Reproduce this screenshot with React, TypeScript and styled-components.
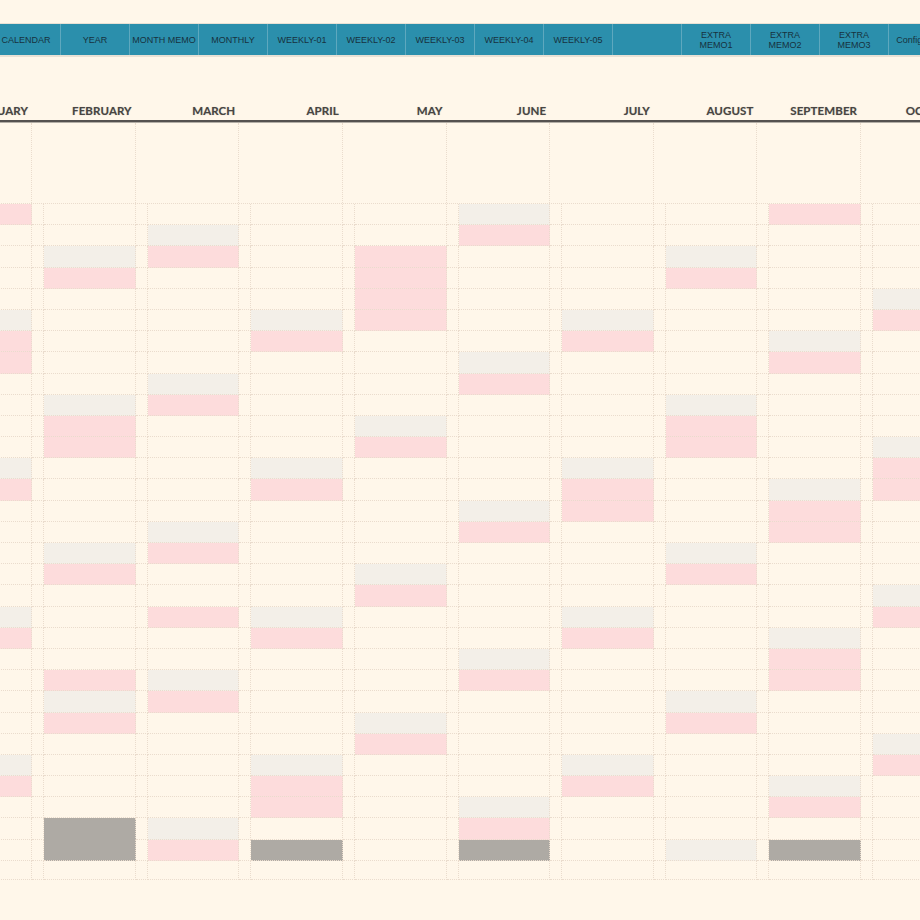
import React from "react";
import styled, { createGlobalStyle } from "styled-components";

type DayKind = "plain" | "sat" | "sun" | "void";

const YEAR = 2024;
const NARROW = 12;
const WIDE = 91.65;
const GROUP = NARROW + WIDE;
const LINE = "#eadccd";

const MONTHS = [
  "JANUARY", "FEBRUARY", "MARCH", "APRIL", "MAY", "JUNE",
  "JULY", "AUGUST", "SEPTEMBER", "OCTOBER", "NOVEMBER", "DECEMBER",
];

const TABS = [
  "CALENDAR", "YEAR", "MONTH MEMO", "MONTHLY", "WEEKLY-01", "WEEKLY-02", "WEEKLY-03",
  "WEEKLY-04", "WEEKLY-05", "", "EXTRA\nMEMO1", "EXTRA\nMEMO2", "EXTRA\nMEMO3", "Configuration",
];

// national holidays (month-day)
const HOLIDAYS = new Set([
  "1-1", "1-8", "2-11", "2-12", "2-23", "3-20", "4-29", "5-3", "5-4", "5-5", "5-6",
  "7-15", "8-11", "8-12", "9-16", "9-22", "9-23", "10-14", "11-3", "11-4", "11-23",
]);

const dayKind = (month: number, day: number): DayKind => {
  if (day > 31) return "plain";
  const date = new Date(YEAR, month, day);
  if (date.getMonth() !== month) return "void";
  if (date.getDay() === 0 || HOLIDAYS.has(`${month + 1}-${day}`)) return "sun";
  if (date.getDay() === 6) return "sat";
  return "plain";
};

const GlobalStyle = createGlobalStyle`
  html, body {
    margin: 0;
    padding: 0;
    background: #fff7ea;
    overflow: hidden;
  }
  * {
    box-sizing: border-box;
  }
`;

const Page = styled.div`
  width: 920px;
  height: 920px;
  overflow: hidden;
  background: #fff7ea;
  padding-top: 23px;
  font-family: "Liberation Sans", Arial, sans-serif;
`;

const TabBar = styled.nav`
  display: flex;
  margin-left: -8px;
  width: 1000px;
  height: 34px;
  background: #2b8fac;
  border-top: 1px solid #e8e1d5;
  border-bottom: 2px solid #e8e1d5;
`;

const Tab = styled.div`
  flex: 0 0 69px;
  display: flex;
  align-items: center;
  justify-content: center;
  text-align: center;
  white-space: pre-line;
  border-right: 1px solid #5ea8be;
  font-size: 9px;
  line-height: 10px;
  color: #17323e;
`;

const Sheet = styled.section`
  margin-left: ${-(GROUP - 32)}px;
  width: ${GROUP * 12}px;
`;

const columns = `repeat(12, ${NARROW}px ${WIDE}px)`;

const MonthHeader = styled.div`
  display: grid;
  grid-template-columns: ${columns};
  height: 40px;
  margin-top: 25px;
  border-bottom: 2px solid #555250;
  box-shadow: 0 1px 0 #b3aea6;
`;

const MonthName = styled.div`
  grid-column: span 2;
  align-self: end;
  text-align: right;
  padding: 0 4px 3px 0;
  font-family: Lato, "Liberation Sans", sans-serif;
  font-weight: 700;
  font-size: 11.5px;
  line-height: 13px;
  letter-spacing: 0.1px;
  color: #474543;
  text-shadow: 0 0 1px rgba(60, 55, 50, 0.35);
`;

const MemoRow = styled.div`
  display: grid;
  grid-template-columns: ${columns};
  height: 81px;
  margin-top: 1px;
  border-bottom: 1px dotted ${LINE};
`;

const MemoCell = styled.div`
  grid-column: span 2;
  border-right: 1px dotted ${LINE};
`;

const DayGrid = styled.div`
  display: grid;
  grid-template-columns: ${columns};
  grid-template-rows: repeat(31, 21.2px) 19px;
`;

const FILL: Record<DayKind, string> = {
  plain: "transparent",
  sat: "#f3efe8",
  sun: "#fddcdc",
  void: "#aeaaa4",
};

const Cell = styled.div<{ $kind?: DayKind; $joined?: boolean }>`
  background: ${({ $kind }) => FILL[$kind ?? "plain"]};
  border-right: 1px dotted ${LINE};
  border-bottom: 1px ${({ $joined }) => ($joined ? "solid #aeaaa4" : `dotted ${LINE}`)};
`;

const App: React.FC = () => {
  const days = Array.from({ length: 32 }, (_, i) => i + 1);

  return (
    <Page>
      <GlobalStyle />
      <TabBar>
        {TABS.map((t, i) => (
          <Tab key={i}>{t}</Tab>
        ))}
      </TabBar>

      <Sheet>
        <MonthHeader>
          {MONTHS.map((m) => (
            <MonthName key={m}>{m}</MonthName>
          ))}
        </MonthHeader>

        <MemoRow>
          {MONTHS.map((m) => (
            <MemoCell key={m} />
          ))}
        </MemoRow>

        <DayGrid>
          {days.map((d) =>
            MONTHS.map((m, mi) => {
              const kind = dayKind(mi, d);
              const joined = kind === "void" && dayKind(mi, d + 1) === "void";
              return (
                <React.Fragment key={`${m}-${d}`}>
                  <Cell />
                  <Cell $kind={kind} $joined={joined} />
                </React.Fragment>
              );
            })
          )}
        </DayGrid>
      </Sheet>
    </Page>
  );
};

export default App;
